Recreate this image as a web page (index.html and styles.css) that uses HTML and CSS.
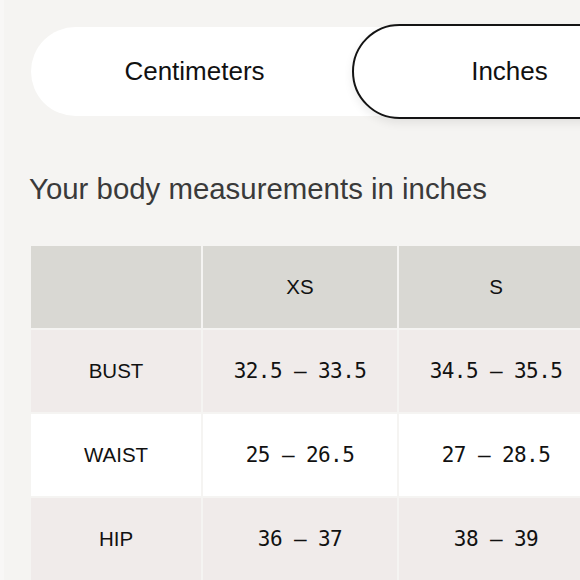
FILE: index.html
```html
<!DOCTYPE html>
<html>
<head>
<meta charset="utf-8">
<link rel="stylesheet" href="styles.css">
</head>
<body>
<div class="page">
  <div class="toggle">
    <div class="opt first">Centimeters</div>
    <div class="opt active">Inches</div>
  </div>
  <h2 class="title">Your body measurements in inches</h2>
  <div class="table">
    <div class="cell head"></div>
    <div class="cell head">XS</div>
    <div class="cell head">S</div>

    <div class="cell tint label">BUST</div>
    <div class="cell tint num">32.5 — 33.5</div>
    <div class="cell tint num">34.5 — 35.5</div>

    <div class="cell plain label">WAIST</div>
    <div class="cell plain num">25 — 26.5</div>
    <div class="cell plain num">27 — 28.5</div>

    <div class="cell tint label">HIP</div>
    <div class="cell tint num">36 — 37</div>
    <div class="cell tint num">38 — 39</div>
  </div>
</div>
</body>
</html>
```

FILE: styles.css
```css
html, body {
  margin: 0;
  padding: 0;
  background: #f5f4f2;
  overflow: hidden;
}
body {
  width: 580px;
  height: 580px;
  border-left: 4px solid #f8f7f6;
  box-sizing: border-box;
}
.page {
  padding: 27px 0 0 27px;
  font-family: "Liberation Sans", Arial, sans-serif;
  color: #111;
}
.toggle {
  display: grid;
  grid-template-columns: 321px 312px;
  width: 633px;
  height: 89px;
  background: #fff;
  border-radius: 45px;
}
.opt {
  display: flex;
  align-items: center;
  justify-content: center;
  font-size: 26px;
  border-radius: 48px;
}
.opt.first {
  padding-left: 6px;
}
.opt.active {
  margin: -3px -3px -3px 0;
  border: 2px solid #141414;
  background: #fff;
  box-shadow: 0 4px 10px rgba(0,0,0,0.08);
}
.title {
  margin: 53px 0 0 -2px;
  font-weight: 400;
  font-size: 29.4px;
  line-height: 40px;
  color: #3a3a3a;
}
.table {
  margin-top: 37px;
  display: grid;
  grid-template-columns: 170px 194px 194px;
  grid-auto-rows: 82px;
  gap: 2px;
  width: 564px;
}
.cell {
  display: flex;
  align-items: center;
  justify-content: center;
  font-size: 20.5px;
}
.head { background: #d9d8d3; }
.tint { background: #f0ebea; }
.plain { background: #fff; }
.num {
  font-family: "DejaVu Sans Mono", monospace;
  font-size: 21px;
  letter-spacing: -0.6px;
}
```
